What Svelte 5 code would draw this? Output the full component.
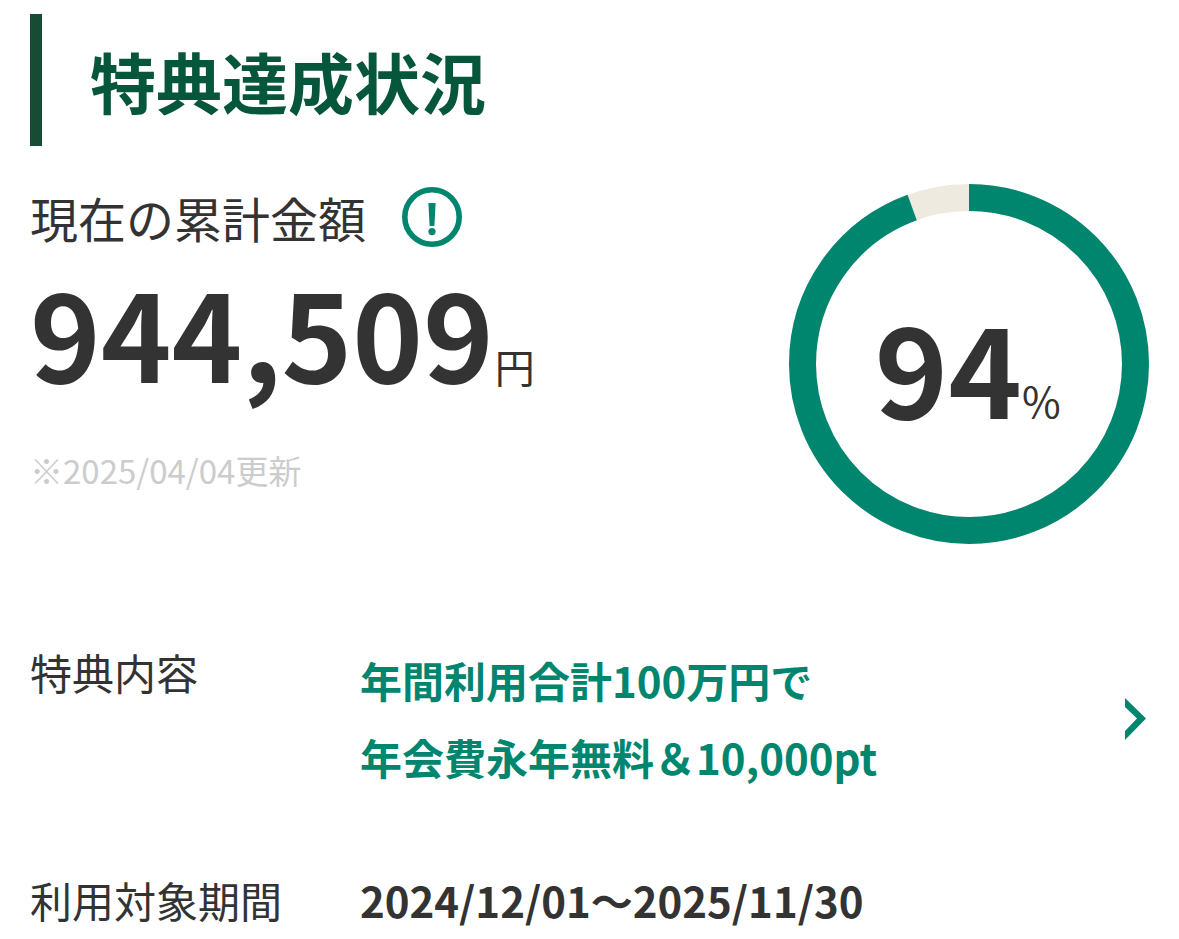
<script lang="ts">
    const total = 944509;
    const goal = 1000000;
    const rate = (total / goal) * 100;
    const rows = [
        { label: "特典内容", lines: ["年間利用合計100万円で", "年会費永年無料＆10,000pt"], link: true },
        { label: "利用対象期間", lines: ["2024/12/01〜2025/11/30"], link: false },
    ];
</script>

<div class="page">
    <h2 class="title">特典達成状況</h2>

    <section class="summary">
        <div class="amount">
            <div class="amount-label">
                <span>現在の累計金額</span>
                <svg class="info" viewBox="0 0 60 60" aria-hidden="true">
                    <circle cx="30" cy="30" r="27.2" fill="none" stroke="#00856f" stroke-width="5.6" />
                    <path d="M26.4 16 H33.6 L32.4 39 H27.6 Z" fill="#00856f" />
                    <circle cx="30" cy="44.6" r="3.6" fill="#00856f" />
                </svg>
            </div>
            <div class="amount-value">{total.toLocaleString("en-US")}<span class="unit">円</span></div>
            <p class="updated">※2025/04/04更新</p>
        </div>

        <div class="ring">
            <svg viewBox="0 0 360 360" aria-hidden="true">
                <circle class="track" cx="180" cy="180" r="166.5" />
                <circle class="bar" cx="180" cy="180" r="166.5" pathLength="100" stroke-dasharray="{rate} 100" />
            </svg>
            <div class="ring-text"><span class="pct">94</span><span class="pct-unit">%</span></div>
        </div>
    </section>

    <dl class="rows">
        {#each rows as row}
            <div class="row" class:link={row.link}>
                <dt>{row.label}</dt>
                <dd>
                    {#each row.lines as line}
                        <span>{line}</span>
                    {/each}
                </dd>
                {#if row.link}
                    <svg class="chevron" viewBox="0 0 21 42" aria-hidden="true">
                        <path d="M0 0 L21 20.5 L0 42 L0 33 L12 20.5 L0 9 Z" fill="#00856f" />
                    </svg>
                {/if}
            </div>
        {/each}
    </dl>
</div>

<style>
    :global(body) {
        background: #fff;
    }

    .page {
        height: 939px;
        overflow: hidden;
        box-sizing: border-box;
        padding: 14px 30px 0 30px;
        color: #333;
        font-family: "Noto Sans CJK JP", "Noto Sans", sans-serif;
    }

    .title {
        margin: 0;
        height: 132px;
        display: flex;
        align-items: center;
        border-left: 12px solid #164c34;
        padding-left: 48px;
        font-size: 66px;
        font-weight: 700;
        line-height: 1;
        color: #06563b;
    }

    .summary {
        display: flex;
        justify-content: space-between;
        margin-top: 38px;
    }

    .amount-label {
        display: flex;
        align-items: center;
        gap: 36px;
        height: 66px;
        font-size: 48px;
        line-height: 1;
    }

    .info {
        width: 60px;
        height: 60px;
    }

    .amount-value {
        margin-top: 21px;
        font-size: 120px;
        font-weight: 700;
        line-height: 120px;
        white-space: nowrap;
    }

    .unit {
        margin-left: 1px;
        font-size: 40px;
        font-weight: 400;
    }

    .updated {
        margin: 20px 0 0;
        font-size: 33px;
        line-height: 48px;
        color: #ccc;
    }

    .ring {
        position: relative;
        width: 360px;
        height: 360px;
    }

    .ring svg {
        display: block;
        width: 100%;
        height: 100%;
        transform: rotate(-90deg);
    }

    .track,
    .bar {
        fill: none;
        stroke-width: 27;
    }

    .track {
        stroke: #eeeae0;
    }

    .bar {
        stroke: #00856f;
    }

    .ring-text {
        position: absolute;
        inset: 0;
        padding-right: 3px;
        display: flex;
        align-items: center;
        justify-content: center;
        white-space: nowrap;
    }

    .pct {
        font-size: 125px;
        font-weight: 700;
        line-height: 1;
    }

    .pct-unit {
        align-self: center;
        margin-top: 72px;
        font-size: 42px;
        line-height: 1;
    }

    .rows {
        margin: 96px 0 0;
        display: flex;
        flex-direction: column;
        gap: 79px;
    }

    .row {
        display: grid;
        grid-template-columns: 330px 1fr 21px;
        align-items: start;
        padding-right: 3px;
    }

    dt {
        font-size: 42px;
        line-height: 64px;
    }

    dd {
        margin: 0;
        padding-top: 8px;
        display: flex;
        flex-direction: column;
        gap: 13px;
        font-size: 42px;
        font-weight: 700;
        line-height: 64px;
        white-space: nowrap;
    }

    .row:not(.link) dd {
        padding-top: 0;
    }

    .row.link dd {
        color: #00856f;
    }

    .chevron {
        width: 21px;
        height: 42px;
        margin-top: 8px;
        align-self: center;
    }
</style>
